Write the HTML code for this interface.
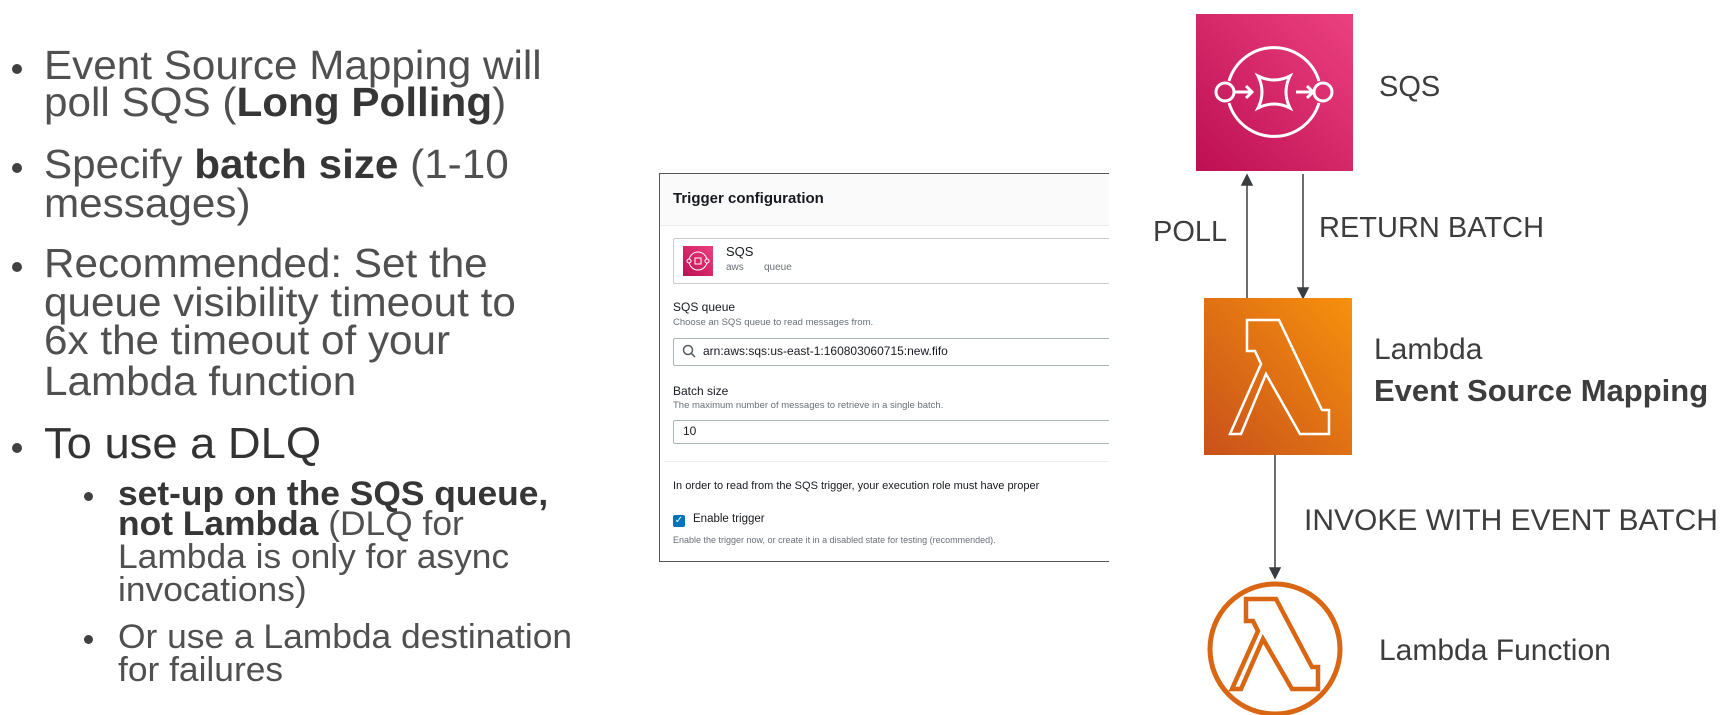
<!DOCTYPE html>
<html><head><meta charset="utf-8"><style>
body{margin:0;width:1723px;height:715px;background:#fff;overflow:hidden;position:relative;font-family:"Liberation Sans",sans-serif;}
.a{position:absolute;white-space:nowrap;}
.L{color:#505050;font-size:41px;line-height:1;transform:scaleX(1.03);transform-origin:0 0}
.S{color:#505050;font-size:34px;line-height:1;transform:scaleX(1.04);transform-origin:0 0}
.b{font-weight:bold;color:#363636}
.dot{position:absolute;width:10px;height:10px;border-radius:50%;background:#404040}
.D{color:#3d3d3d;font-size:29px;line-height:1}
.p{position:absolute;font-family:"Liberation Sans",sans-serif;color:#16191f;white-space:nowrap}
</style></head><body>

<div class="dot" style="left:12px;top:64px"></div>
<div class="a L" style="left:44px;top:45px">Event Source Mapping will</div>
<div class="a L" style="left:44px;top:82px">poll SQS (<span class="b">Long Polling</span>)</div>
<div class="dot" style="left:12px;top:163px"></div>
<div class="a L" style="left:44px;top:144px">Specify <span class="b">batch size</span> (1-10</div>
<div class="a L" style="left:44px;top:183px">messages)</div>
<div class="dot" style="left:12px;top:262px"></div>
<div class="a L" style="left:44px;top:243px">Recommended: Set the</div>
<div class="a L" style="left:44px;top:282px">queue visibility timeout to</div>
<div class="a L" style="left:44px;top:320px">6x the timeout of your</div>
<div class="a L" style="left:44px;top:361px">Lambda function</div>
<div class="dot" style="left:12px;top:443px"></div>
<div class="a L" style="left:44px;top:422px;font-size:44px;color:#333">To use a DLQ</div>
<div class="dot" style="left:84px;top:492px;width:9px;height:9px"></div>
<div class="a S" style="left:118px;top:477px"><span class="b">set-up on the SQS queue,</span></div>
<div class="a S" style="left:118px;top:507px"><span class="b">not Lambda</span> (DLQ for</div>
<div class="a S" style="left:118px;top:540px">Lambda is only for async</div>
<div class="a S" style="left:118px;top:573px">invocations)</div>
<div class="dot" style="left:84px;top:635px;width:9px;height:9px"></div>
<div class="a S" style="left:118px;top:620px">Or use a Lambda destination</div>
<div class="a S" style="left:118px;top:653px">for failures</div>

<div style="position:absolute;left:659px;top:173px;width:449px;height:387px;border:1.5px solid #555;border-right:none;background:#fff;overflow:hidden">
  <div style="position:absolute;left:0;top:0;width:100%;height:51px;background:#fafafa;border-bottom:1px solid #eaeded"></div>
  <div class="p" style="left:13px;top:16px;font-size:15px;font-weight:bold">Trigger configuration</div>
  <div style="position:absolute;left:13px;top:64px;width:440px;height:44px;border:1px solid #c9cccc;border-radius:2px"></div>
  <svg style="position:absolute;left:23px;top:72px" width="30" height="30" viewBox="0 0 30 30"><defs><linearGradient id="g0" x1="0" y1="1" x2="1" y2="0"><stop offset="0" stop-color="#bd0f52"/><stop offset="1" stop-color="#ec4180"/></linearGradient></defs><rect width="30" height="30" fill="url(#g0)"/><circle cx="15" cy="15" r="9" fill="none" stroke="#fff" stroke-width="1"/><circle cx="6" cy="15" r="2" fill="#d22a63" stroke="#fff"/><circle cx="24" cy="15" r="2" fill="#d22a63" stroke="#fff"/><rect x="12" y="12" width="6" height="6" fill="none" stroke="#fff"/></svg>
  <div class="p" style="left:66px;top:70px;font-size:13px">SQS</div>
  <div class="p" style="left:66px;top:88px;font-size:10px;color:#687078">aws</div>
  <div class="p" style="left:104px;top:88px;font-size:10px;color:#687078">queue</div>
  <div class="p" style="left:13px;top:126px;font-size:12px">SQS queue</div>
  <div class="p" style="left:13px;top:143px;font-size:9.5px;color:#687078">Choose an SQS queue to read messages from.</div>
  <div style="position:absolute;left:13px;top:164px;width:440px;height:26px;border:1px solid #aab7b8;border-radius:2px"></div>
  <svg style="position:absolute;left:22px;top:170px" width="14" height="14" viewBox="0 0 14 14"><circle cx="6" cy="6" r="4.5" fill="none" stroke="#545b64" stroke-width="1.5"/><path d="M9.3 9.3 L13 13" stroke="#545b64" stroke-width="1.5"/></svg>
  <div class="p" style="left:43px;top:170px;font-size:12px">arn:aws:sqs:us-east-1:160803060715:new.fifo</div>
  <div class="p" style="left:13px;top:210px;font-size:12px">Batch size</div>
  <div class="p" style="left:13px;top:226px;font-size:9.5px;color:#687078">The maximum number of messages to retrieve in a single batch.</div>
  <div style="position:absolute;left:13px;top:246px;width:440px;height:22px;border:1px solid #aab7b8;border-radius:2px"></div>
  <div class="p" style="left:23px;top:250px;font-size:12px">10</div>
  <div style="position:absolute;left:4px;top:287px;width:100%;border-top:1px solid #eaeded"></div>
  <div class="p" style="left:13px;top:306px;font-size:11px">In order to read from the SQS trigger, your execution role must have proper</div>
  <div style="position:absolute;left:13px;top:341px;width:12px;height:12px;background:#0073bb;border-radius:2px;color:#fff;font-size:10px;line-height:12px;text-align:center">✓</div>
  <div class="p" style="left:33px;top:339px;font-size:11.5px">Enable trigger</div>
  <div class="p" style="left:13px;top:361px;font-size:9px;color:#687078">Enable the trigger now, or create it in a disabled state for testing (recommended).</div>
</div>

<svg style="position:absolute;left:0;top:0" width="1723" height="715">
<defs>
<linearGradient id="gs" x1="0" y1="1" x2="1" y2="0"><stop offset="0" stop-color="#bd0f52"/><stop offset="1" stop-color="#ec4180"/></linearGradient>
<linearGradient id="gl" x1="0" y1="1" x2="1" y2="0"><stop offset="0" stop-color="#c8511b"/><stop offset="1" stop-color="#f7910d"/></linearGradient>
</defs>
<rect x="1196" y="14" width="157" height="157" fill="url(#gs)"/>
<g fill="none" stroke="#fff" stroke-width="3">
<path d="M1229 81 A47 47 0 0 1 1319 81"/><path d="M1229 103 A47 47 0 0 0 1319 103"/>
<circle cx="1225" cy="92" r="9"/><circle cx="1323" cy="92" r="9"/>
<path d="M1235 92 H1252 M1246 86 L1252 92 L1246 98"/><path d="M1296 92 H1313 M1307 86 L1313 92 L1307 98"/>
<path d="M1258 76 Q1274 84 1290 76 Q1282 92 1290 108 Q1274 100 1258 108 Q1266 92 1258 76 Z"/>
</g>
<g stroke="#3a3d40" stroke-width="1.5" fill="#3a3d40">
<line x1="1247" y1="298" x2="1247" y2="182"/><path d="M1242 185 L1247 175 L1252 185 Z"/>
<line x1="1303" y1="174" x2="1303" y2="290"/><path d="M1298 288 L1303 298 L1308 288 Z"/>
<line x1="1275" y1="455" x2="1275" y2="570"/><path d="M1270 568 L1275 578 L1280 568 Z"/>
</g>
<rect x="1204" y="298" width="148" height="157" fill="url(#gl)"/>
<g transform="translate(1204,298)"><path d="M43 22 H75 L118 112 H125 V136 H96 L62 76 L37 136 H26 L57 66 L51 53 H43 Z" fill="none" stroke="#fff" stroke-width="2.5"/></g>
<circle cx="1275" cy="649" r="65" fill="none" stroke="#d86613" stroke-width="5"/>
<g transform="translate(1206,579)"><path d="M40 20 H70 L106 88 H112 V110 H86 L57 60 L35 110 H26 L52 52 L47 42 H40 Z" fill="none" stroke="#d86613" stroke-width="4.5"/></g>
</svg>
<div class="a D" style="left:1379px;top:73px">SQS</div>
<div class="a D" style="left:1153px;top:218px">POLL</div>
<div class="a D" style="left:1319px;top:214px">RETURN BATCH</div>
<div class="a D" style="left:1374px;top:335px;font-size:30px">Lambda</div>
<div class="a D" style="left:1374px;top:375px;font-size:31px;font-weight:bold">Event Source Mapping</div>
<div class="a D" style="left:1304px;top:506px;font-size:30px">INVOKE WITH EVENT BATCH</div>
<div class="a D" style="left:1379px;top:636px;font-size:30px">Lambda Function</div>
</body></html>
